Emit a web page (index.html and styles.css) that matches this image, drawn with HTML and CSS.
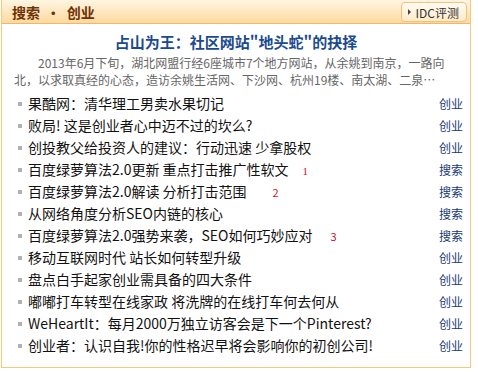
FILE: index.html
```html
<!DOCTYPE html>
<html lang="zh-CN">
<head>
  <meta charset="UTF-8">
  <title>搜索 · 创业</title>
  <link rel="stylesheet" href="styles.css">
</head>
<body>
  <div class="news-box">
    <div class="news-head">
      <span class="news-head-title">搜索 &nbsp;·&nbsp; 创业</span>
      <a class="head-btn" href="#"><span class="tri"></span>IDC评测</a>
    </div>
    <div class="top-story">
      <div class="top-title">占山为王：社区网站"地头蛇"的抉择</div>
      <div class="top-summary">2013年6月下旬，湖北网盟行经6座城市7个地方网站，从余姚到南京，一路向<br>北，以求取真经的心态，造访余姚生活网、下沙网、杭州19楼、南太湖、二泉…</div>
    </div>
    <ul class="news-list">
      <li><a href="#">果酷网：清华理工男卖水果切记</a><span class="cat">创业</span></li>
      <li><a href="#">败局! 这是创业者心中迈不过的坎么?</a><span class="cat">创业</span></li>
      <li><a href="#">创投教父给投资人的建议：行动迅速 少拿股权</a><span class="cat">创业</span></li>
      <li><a href="#">百度绿萝算法2.0更新 重点打击推广性软文<span class="num num-serif">1</span></a><span class="cat">搜索</span></li>
      <li><a href="#">百度绿萝算法2.0解读 分析打击范围<span class="num num-wide">2</span></a><span class="cat">搜索</span></li>
      <li><a href="#">从网络角度分析SEO内链的核心</a><span class="cat">搜索</span></li>
      <li><a href="#">百度绿萝算法2.0强势来袭，SEO如何巧妙应对<span class="num">3</span></a><span class="cat">搜索</span></li>
      <li><a href="#">移动互联网时代 站长如何转型升级</a><span class="cat">创业</span></li>
      <li><a href="#">盘点白手起家创业需具备的四大条件</a><span class="cat">创业</span></li>
      <li><a href="#">嘟嘟打车转型在线家政 将洗牌的在线打车何去何从</a><span class="cat">创业</span></li>
      <li><a href="#">WeHeartIt：每月2000万独立访客会是下一个Pinterest?</a><span class="cat">创业</span></li>
      <li><a href="#">创业者：认识自我!你的性格迟早将会影响你的初创公司!</a><span class="cat">创业</span></li>
    </ul>
  </div>
</body>
</html>
```

FILE: styles.css
```css
html, body {
  margin: 0;
  background: #fff;
  font-family: "Noto Sans CJK SC", "Liberation Sans", sans-serif;
  color: #222;
}
a { text-decoration: none; }
.news-box {
  width: 468px;
  margin-left: 1px;
  border: 1px solid #f5c87e;
  border-top: none;
  padding-bottom: 11px;
}
.news-head {
  height: 23px;
  border-bottom: 1px solid #f0b866;
  background: linear-gradient(#fff5e2, #fcd99e);
  display: flex;
  align-items: center;
  justify-content: space-between;
  padding: 0 3px 0 10px;
}
.news-head-title {
  font-size: 14px;
  font-weight: bold;
  color: #6e3205;
}
.head-btn {
  display: flex;
  align-items: center;
  gap: 5px;
  height: 18px;
  padding: 0 7px 0 6px;
  border: 1px solid #f1c27c;
  border-radius: 4px;
  background: linear-gradient(#fffbf2, #fdebc9);
  color: #333;
  font-size: 12px;
  margin-top: 1px;
}
.tri {
  width: 0;
  height: 0;
  border-left: 3px solid #444;
  border-top: 3px solid transparent;
  border-bottom: 3px solid transparent;
}
.top-story {
  padding: 8px 12px 0 12px;
}
.top-title {
  text-align: center;
  font-size: 15px;
  line-height: 20px;
  font-weight: bold;
  color: #1b4a8e;
}
.top-summary {
  margin-top: 2px;
  font-size: 12px;
  line-height: 17px;
  color: #666;
  text-indent: 24px;
  white-space: nowrap;
}
.news-list {
  list-style: none;
  margin: 4px 0 0 0;
  padding: 0 7px 0 16px;
}
.news-list li {
  display: flex;
  align-items: center;
  justify-content: space-between;
  height: 22px;
  font-size: 14px;
  position: relative;
  padding-left: 10px;
}
.news-list li::before {
  content: "";
  position: absolute;
  left: 0;
  top: 10px;
  width: 4px;
  height: 4px;
  background: #b0b0b0;
}
.news-list a {
  color: #111;
}
.cat {
  font-size: 12px;
  color: #183a74;
}
.num {
  margin-left: 18px;
  font-size: 11px;
  color: #c8102e;
}
.num-serif {
  margin-left: 14px;
  font-family: "Liberation Serif", serif;
}
.num-wide { margin-left: 26px; }
```
